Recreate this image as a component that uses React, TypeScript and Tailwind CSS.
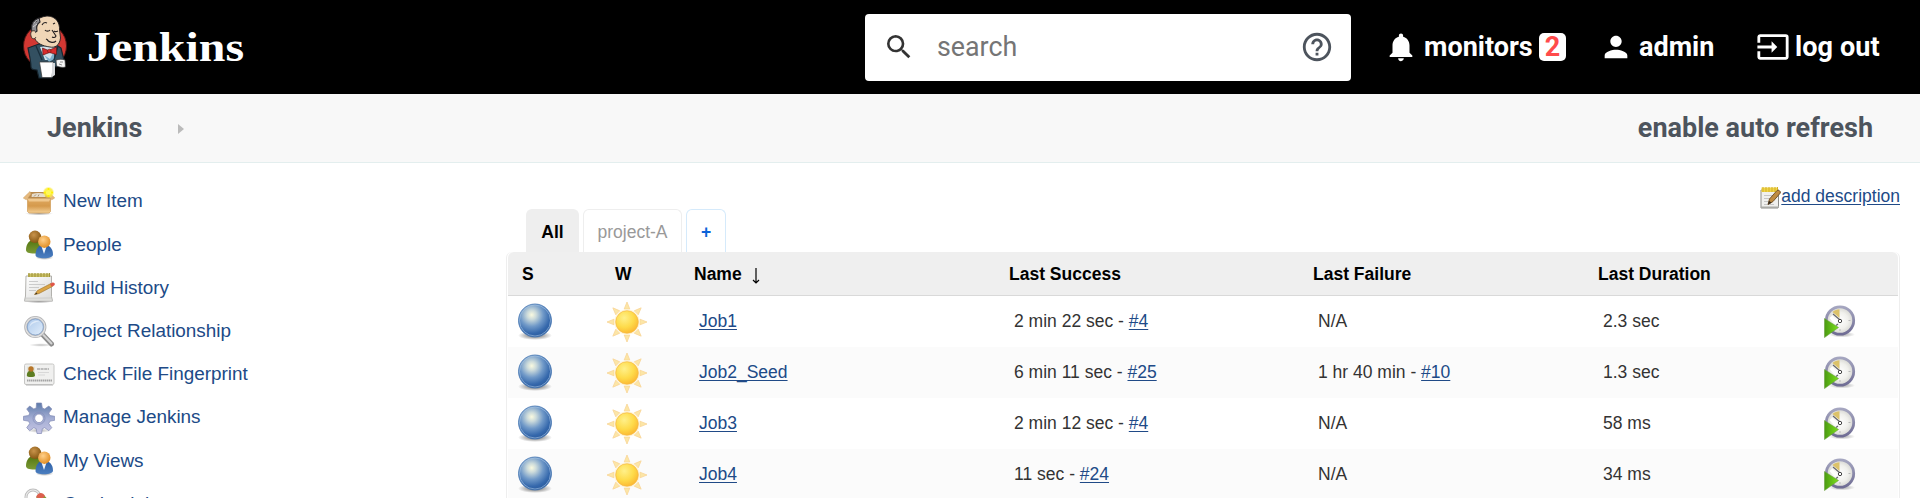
import React from "react";
import { MdHelpOutline, MdInput, MdNotifications, MdPerson, MdSearch } from "react-icons/md";

const Defs = () => (
  <svg width="0" height="0" className="absolute">
    <defs>
      <radialGradient id="ball" cx="0.4" cy="0.33" r="0.7">
        <stop offset="0" stopColor="#fafae0" />
        <stop offset="0.2" stopColor="#cbdadb" />
        <stop offset="0.5" stopColor="#7099c8" />
        <stop offset="0.8" stopColor="#3568ac" />
        <stop offset="1" stopColor="#2a5a9c" />
      </radialGradient>
      <radialGradient id="shadow">
        <stop offset="0" stopColor="#000" stopOpacity="0.6" />
        <stop offset="0.6" stopColor="#000" stopOpacity="0.25" />
        <stop offset="1" stopColor="#000" stopOpacity="0" />
      </radialGradient>
      <radialGradient id="sun" cx="0.38" cy="0.32" r="0.75">
        <stop offset="0" stopColor="#fff08a" />
        <stop offset="0.55" stopColor="#fedb4a" />
        <stop offset="1" stopColor="#fbb32e" />
      </radialGradient>
      <linearGradient id="box" x1="0" y1="0" x2="0" y2="1">
        <stop offset="0" stopColor="#dfa860" />
        <stop offset="0.5" stopColor="#d59a4c" />
        <stop offset="1" stopColor="#f4cf95" />
      </linearGradient>
      <radialGradient id="glow">
        <stop offset="0" stopColor="#ffffc0" />
        <stop offset="0.35" stopColor="#fff23a" />
        <stop offset="0.7" stopColor="#fbea3c" stopOpacity="0.8" />
        <stop offset="1" stopColor="#fff36a" stopOpacity="0" />
      </radialGradient>
      <radialGradient id="brown" cx="0.4" cy="0.35" r="0.7">
        <stop offset="0" stopColor="#c9934a" />
        <stop offset="1" stopColor="#80520f" />
      </radialGradient>
      <radialGradient id="orange" cx="0.4" cy="0.35" r="0.7">
        <stop offset="0" stopColor="#ffd08a" />
        <stop offset="1" stopColor="#e08a1e" />
      </radialGradient>
      <linearGradient id="green" x1="0" y1="0" x2="0" y2="1">
        <stop offset="0" stopColor="#50740f" />
        <stop offset="1" stopColor="#7c9a36" />
      </linearGradient>
      <linearGradient id="blue" x1="0" y1="0" x2="0" y2="1">
        <stop offset="0" stopColor="#2c5ea4" />
        <stop offset="1" stopColor="#4c7fc0" />
      </linearGradient>
      <linearGradient id="paper" x1="0" y1="0" x2="1" y2="1">
        <stop offset="0" stopColor="#ffffff" />
        <stop offset="1" stopColor="#d9d9d7" />
      </linearGradient>
      <linearGradient id="lens" x1="0" y1="0" x2="1" y2="1">
        <stop offset="0" stopColor="#a9c6ea" />
        <stop offset="1" stopColor="#e6f1fc" />
      </linearGradient>
      <linearGradient id="gear" x1="0" y1="0" x2="0" y2="1">
        <stop offset="0" stopColor="#5c7aa9" />
        <stop offset="0.5" stopColor="#a3add3" />
        <stop offset="1" stopColor="#c5c4e4" />
      </linearGradient>
      <linearGradient id="rim" x1="0" y1="0" x2="0" y2="1">
        <stop offset="0" stopColor="#a5a6c0" />
        <stop offset="1" stopColor="#6f6c94" />
      </linearGradient>
      <radialGradient id="face">
        <stop offset="0" stopColor="#ffffff" />
        <stop offset="0.6" stopColor="#f0f0ec" />
        <stop offset="1" stopColor="#d4d4d0" />
      </radialGradient>
      <linearGradient id="play" x1="0" y1="0" x2="1" y2="0">
        <stop offset="0" stopColor="#4b9a12" />
        <stop offset="1" stopColor="#7be01c" />
      </linearGradient>
    </defs>
  </svg>
);

const Icon = ({ children }: { children: React.ReactNode }) => (
  <svg width="32" height="32" viewBox="0 0 32 32" className="block shrink-0">
    {children}
  </svg>
);

const NewItemIcon = () => (
  <Icon>
    <ellipse cx="16" cy="27.5" rx="14" ry="2" fill="url(#shadow)" opacity="0.6" />
    <path d="M4.500 13h23v12.500l-1.500 1.500H6L4.500 25.500z" fill="url(#box)" stroke="#d09c58" strokeWidth="0.7" />
    <path d="M4.500 13 7 6h18.500l2.500 7z" fill="#b98a4e" />
    <path d="M9 8c4-1.500 9-1.500 13 0l.5 3h-14z" fill="#e6ddcd" />
    <path d="M11 10.500 13 8.500M15 10.500l1-2" stroke="#a99477" strokeWidth="1" />
    <path d="M4.500 12.500h23l-1.500 3H6z" fill="#f0c88e" />
    <path d="M7 5.500 0.300 12l3 1.800L8 8zM25.500 5.500 31.700 12l-3 1.800L24.500 8z" fill="#e6b97d" stroke="#d0a468" strokeWidth="0.6" />
    <circle cx="25.500" cy="6.500" r="6" fill="url(#glow)" />
    <path d="M25.500 2v9M21 6.500h9" stroke="#fff200" strokeWidth="1.500" />
    <circle cx="25.500" cy="6.500" r="2.600" fill="#fff85a" />
  </Icon>
);

const PeopleIcon = () => (
  <Icon>
    <ellipse cx="21.500" cy="28.500" rx="9" ry="2.500" fill="url(#shadow)" opacity="0.7" />
    <path d="M3 21c0-6 3.500-10.500 8.500-10.500S20 14 20 20c0 2.500-4 4.500-9 4.500S3 23.500 3 21z" fill="url(#green)" />
    <circle cx="12" cy="7.800" r="6.200" fill="url(#brown)" />
    <path d="M12.500 26c0-5.500 3-10.500 8.500-10.500S30 20 30 25.500c0 2.500-4 3.800-9 3.800s-8.500-1-8.500-3.300z" fill="url(#blue)" />
    <path d="M18.500 17.500 21 25l2.500-7.500z" fill="#f0f4fa" />
    <circle cx="21.300" cy="12.700" r="6.200" fill="url(#orange)" />
  </Icon>
);

const HistoryIcon = () => (
  <Icon>
    <ellipse cx="16" cy="29.500" rx="14" ry="1.700" fill="url(#shadow)" opacity="0.7" />
    <path d="M3 4h25.500v20.500l1 4.500H1.500L2.500 24z" fill="url(#paper)" stroke="#aaa9a5" strokeWidth="0.9" />
    <path d="M2.500 26 1.500 29h28l-1-3z" fill="#dfdfdc" stroke="#bbb" strokeWidth="0.5" />
    <path d="M5 1.500h22V5H5z" fill="#c9bf63" />
    <path d="M6 1v4M9 1v4M12 1v4M15 1v4M18 1v4M21 1v4M24 1v4M26.500 1v4" stroke="#a0953e" strokeWidth="1.100" />
    <path d="M6 9.500h9M6 12.500h16M6 15.500h10M6 18.500h7" stroke="#c6c6c6" strokeWidth="0.900" />
    <path d="m11.500 22.500 3-4L28 11.500l1.700 2.800L16 21.500z" fill="#dba545" stroke="#a67a30" strokeWidth="0.7" />
    <path d="m11.500 22.500 2-2 1 1.500z" fill="#3f3525" />
    <path d="m27 12 2.500-1.500c2-.500 3.200 2 1.500 3l-2.500 1.300z" fill="#df5648" />
  </Icon>
);

const SearchRelIcon = () => (
  <Icon>
    <ellipse cx="18" cy="30" rx="12" ry="1.800" fill="url(#shadow)" opacity="0.4" />
    <path d="m20 20 8.500 9" stroke="#8d8d8d" strokeWidth="5" strokeLinecap="round" />
    <path d="m20 19.500 8.500 9" stroke="#d4d4d4" strokeWidth="2" strokeLinecap="round" />
    <circle cx="12.300" cy="12" r="9.600" fill="url(#lens)" stroke="#b4b4b6" strokeWidth="3" />
    <circle cx="12.300" cy="12" r="9.600" fill="none" stroke="#e2e2e2" strokeWidth="1.300" />
    <circle cx="12.300" cy="12" r="8" fill="none" stroke="#789bc8" strokeWidth="0.7" />
    <path d="M6.500 12c.500-5 6-7.500 10-5-5-.500-8 2-10 5z" fill="#fff" opacity="0.5" />
  </Icon>
);

const FingerprintIcon = () => (
  <Icon>
    <rect x="1.500" y="6" width="29.500" height="20.500" rx="1.500" fill="#f0f0ef" stroke="#c6c6c4" />
    <path d="M3 27.200h27" stroke="#a7a7a7" opacity="0.6" />
    <rect x="4" y="8.500" width="8" height="10" fill="#e3e5dc" />
    <path d="M3.800 17.500c0-3 1.500-5 4-5s4.200 2 4.200 5c0 2-8.200 2-8.200 0z" fill="#5d7d22" />
    <circle cx="8" cy="11" r="2.700" fill="#b7762a" />
    <path d="M14 11h12" stroke="#ababab" strokeWidth="1.700" strokeDasharray="3 .6" />
    <path d="M15 14.500h11M15 17h7" stroke="#d8d8d8" />
    <path d="M4 22.500h25" stroke="#a4a4a4" strokeWidth="2.200" strokeDasharray="1.500 .5" />
  </Icon>
);

const GearIcon = () => (
  <Icon>
    <ellipse cx="16" cy="28.500" rx="12" ry="2.500" fill="url(#shadow)" opacity="0.5" />
    <path
      fillRule="evenodd"
      d="M13.500 1h5l.8 5 2.400 1 4.100-3 3 3-3 4.100 1 2.400 4.900.8v4l-4.900.9-1 2.400 3 4.100-3 3-4.100-3-2.400 1-.8 4.800h-4.500l-.8-4.800-2.400-1-4.100 3-3-3 3-4.100-1-2.400-5.200-.9v-4l5.200-.8 1-2.400-3-4.100 3-3 4.100 3 2.400-1zM16 12a4.300 4.300 0 1 0 0 8.600 4.300 4.300 0 0 0 0-8.600z"
      fill="url(#gear)"
      stroke="#8189b4"
      strokeWidth="0.7"
    />
    <circle cx="16" cy="16.300" r="6" fill="none" stroke="#8790bb" strokeWidth="0.8" />
  </Icon>
);

const KeysIcon = () => (
  <Icon>
    <circle cx="10" cy="9" r="7" fill="none" stroke="#bdbdbd" strokeWidth="3" />
    <circle cx="10" cy="9" r="7" fill="none" stroke="#ececec" strokeWidth="1.200" />
    <path d="M13 10c3-5 9-4 11 1v10H13z" fill="#7e9e35" />
    <path d="M13 9c2-5 7-5 9-1l-4 4z" fill="#dc604e" />
    <path d="M9 15h10v14H9z" fill="#d5a94d" />
  </Icon>
);

const NotepadIcon = () => (
  <svg width="22" height="23" viewBox="0 0 22 23" className="block shrink-0">
    <path d="M1 4h17.500v16.500l-.5 1.500H1z" fill="#f0f0ee" stroke="#8b8b88" strokeWidth="1" />
    <path d="M1 20.500h17.500V22H1z" fill="#aaaaa6" />
    <path d="M1.500 1.500h16.500v4.500H1.500z" fill="#f0d548" />
    <path d="M3 1v5M6 1v5M9 1v5M12 1v5M15 1v5M17.500 1v5" stroke="#d3af28" strokeWidth="1" />
    <path d="M4 9.500h10M4 12.500h6M4 15.500h4M4 18.500h10" stroke="#c6c6c6" strokeWidth="1" />
    <path d="M8 18.500 9.500 13l7.500-8.500c1.500-1 4 .8 3.300 2.500L13 15.500z" fill="#bf8c42" stroke="#76552a" strokeWidth="1" />
    <path d="m8 18.500 1-3.800 2.500 2z" fill="#332a20" />
  </svg>
);

const Ball = () => (
  <svg width="34" height="38" viewBox="0 0 34 38" className="block">
    <ellipse cx="17" cy="32.500" rx="17" ry="4.500" fill="url(#shadow)" />
    <circle cx="17" cy="17.500" r="16.500" fill="url(#ball)" stroke="#4576b3" strokeWidth="0.8" />
    <circle cx="17" cy="17.500" r="15.500" fill="none" stroke="#a9c6e6" strokeWidth="0.9" opacity="0.65" />
  </svg>
);

const rays = [0, 45, 90, 135, 180, 225, 270, 315];
const Sun = () => (
  <svg width="42" height="42" viewBox="-21 -21 42 42" className="block">
    {rays.map((a) => (
      <path key={a} d="M-2.800-13 0-20 2.800-13z" fill="#fce6a6" stroke="#f9d698" strokeWidth="0.8" transform={`rotate(${a})`} />
    ))}
    <circle r="12.800" fill="#fff3cf" opacity="0.7" />
    <circle r="11.300" fill="url(#sun)" stroke="#f7b845" strokeWidth="0.7" />
  </svg>
);

const BuildClock = () => (
  <svg width="32" height="34" viewBox="0 0 32 34" className="block">
    <ellipse cx="18" cy="29.500" rx="13" ry="3" fill="url(#shadow)" opacity="0.6" />
    <circle cx="16" cy="15.500" r="13.700" fill="url(#face)" stroke="url(#rim)" strokeWidth="2.800" />
    <path d="m15.500 13-7-6c2-2 4.500-2.800 7-2.800z" fill="#dcc26a" />
    <path d="M24.500 15.500h2M16 24v2" stroke="#bbb" strokeWidth="1" />
    <path d="m9 9 6.500 5.500M14 19l-2 1.500" fill="none" stroke="#66666c" strokeWidth="1.200" />
    <circle cx="16" cy="16" r="1.700" fill="#fff" stroke="#444" strokeWidth="1" />
    <path d="m5.500 13 3-2.500 5.500 6.500-3 2z" fill="#fff" />
    <path d="M0.500 13.500 14.500 22.500 0.500 32.500z" fill="url(#play)" stroke="#6aa03e" strokeWidth="0.6" />
  </svg>
);

const Butler = () => (
  <svg width="46" height="66" viewBox="0 0 46 66" className="block">
    <ellipse cx="23" cy="32" rx="21.500" ry="22" fill="#d33833" stroke="#4a1512" strokeWidth="1" />
    <path d="M6 34 17 30h16l6 4 3 12-2 6-8 1-2 11H17l-2-8c-4 0-6-1-6-3 0-6-2-13-3-19z" fill="#335061" stroke="#17252e" strokeWidth="1.200" />
    <path d="M18 33 23 46h6l5-12-8-2z" fill="#d4e3ec" />
    <path d="m22 41 6 4 4-8v8l-5 3z" fill="#7fb0cc" />
    <path d="m14 32 6 14M36 32l-4 14" stroke="#1a2f3c" strokeWidth="1.300" />
    <path d="M12 19c-3-8 2-16 13-17 9 0 13 7 12.500 14l1 8c-1 8-6 10-10.500 9-8-1-13-4-15-8z" fill="#f0d6b7" stroke="#231f20" strokeWidth="0.900" />
    <path d="M17 4c-6 2-8 6-7.500 12l1.500 4 4-3c-1-4 0-7 3-9z" fill="#8d8c91" stroke="#2b292c" strokeWidth="1.200" />
    <path d="M12 9c1-2 3-3 5-3M11 13l4-3" stroke="#d2d1d3" strokeWidth="0.900" />
    <path d="M13 17c-3-1-5 1-4 5s4 3 5 1" fill="#f0d6b7" stroke="#332a25" strokeWidth="0.900" />
    <path d="M20 11c1-2 3-3 5-2M31 10l2-1M23 16c1 1.500 4 1.500 5 0M32 17c1 1 2 1 4 0M30 16l4 6c-1 2-2 2-4 1M25 26c3 3 7 3 9 1M24 25l2 1" fill="none" stroke="#231f20" strokeWidth="1.100" />
    <path d="m20.500 34 6 2.500 8-3.500v7.500l-7-2-6.500 2.500z" fill="#d92c2c" stroke="#651716" strokeWidth="0.700" />
    <circle cx="27.300" cy="37" r="1.800" fill="#d92c2c" stroke="#651716" strokeWidth="0.500" />
    <path d="M17.500 48h14l-1.500 15.500H20z" fill="#fff" stroke="#353535" strokeWidth="0.700" />
    <path d="M30 49h3v12l-3 2z" fill="#d6d8db" />
    <path d="M34 46c4-1 6-1 9 0l.5 7c-3 1-6 0-9-1z" fill="#f6f6f6" stroke="#333" strokeWidth="0.700" />
    <path d="M38 48h3M37 50l3 1" stroke="#777" strokeWidth="0.800" />
  </svg>
);

const menu = [
  { label: "New Item", Icon: NewItemIcon },
  { label: "People", Icon: PeopleIcon },
  { label: "Build History", Icon: HistoryIcon },
  { label: "Project Relationship", Icon: SearchRelIcon },
  { label: "Check File Fingerprint", Icon: FingerprintIcon },
  { label: "Manage Jenkins", Icon: GearIcon },
  { label: "My Views", Icon: PeopleIcon },
  { label: "Credentials", Icon: KeysIcon },
];

type Run = { age: string; build?: string };
const jobs: { name: string; success: Run; failure: Run; duration: string }[] = [
  { name: "Job1", success: { age: "2 min 22 sec", build: "#4" }, failure: { age: "N/A" }, duration: "2.3 sec" },
  { name: "Job2_Seed", success: { age: "6 min 11 sec", build: "#25" }, failure: { age: "1 hr 40 min", build: "#10" }, duration: "1.3 sec" },
  { name: "Job3", success: { age: "2 min 12 sec", build: "#4" }, failure: { age: "N/A" }, duration: "58 ms" },
  { name: "Job4", success: { age: "11 sec", build: "#24" }, failure: { age: "N/A" }, duration: "34 ms" },
];

const link = "text-[#204a87] underline underline-offset-2";

const RunText = ({ run }: { run: Run }) => (
  <span>
    {run.age}
    {run.build && (
      <>
        {" - "}
        <a className={link}>{run.build}</a>
      </>
    )}
  </span>
);

export default function App() {
  return (
    <div className="h-[498px] w-[1920px] overflow-hidden bg-white font-['Liberation_Sans',sans-serif] text-[17.5px] text-[#333]">
      <Defs />
      <header className="flex h-[94px] items-center bg-black font-[Roboto,sans-serif] text-[27px] font-bold text-white">
        <div className="flex w-[865px] items-center pl-[22px]">
          <Butler />
          <span className="-mt-px ml-[19px] origin-left scale-x-[1.14] font-['Liberation_Serif',serif] text-[42px] leading-none font-bold">
            Jenkins
          </span>
        </div>
        <div className="flex h-[67px] w-[486px] items-center rounded bg-white pr-[17px] pl-[18px]">
          <MdSearch size={32} color="#333" />
          <span className="ml-[22px] flex-1 text-[26.8px] font-normal text-[#757575]">search</span>
          <MdHelpOutline size={34} color="#4d545d" />
        </div>
        <nav className="flex items-center">
          <div className="flex w-[215px] items-center pl-[33px]">
            <MdNotifications size={34} />
            <span className="ml-[6px] w-[108px]">monitors</span>
            <span className="ml-[7px] flex h-7 w-[27px] items-center justify-center rounded-[5px] bg-white font-bold text-[#ff4b4b]">2</span>
          </div>
          <div className="flex w-[156px] items-center pl-[33px]">
            <MdPerson size={34} />
            <span className="ml-[6px]">admin</span>
          </div>
          <div className="flex items-center pl-[34px]">
            <MdInput size={34} />
            <span className="ml-[5px] tracking-[0.1px]">log out</span>
          </div>
        </nav>
      </header>

      <div className="flex h-[69px] items-center justify-between border-b border-[#e3eeee] bg-[#f8f8f8] pr-[47px] pl-[47px] font-[Roboto,sans-serif] text-[27px] font-bold text-[#4d545d]">
        <div className="flex items-center">
          <span>Jenkins</span>
          <svg width="6" height="10" viewBox="0 0 6 10" className="mt-px ml-[36px]">
            <path d="M0 0 6 5 0 10z" fill="#bbb" />
          </svg>
        </div>
        <span>enable auto refresh</span>
      </div>

      <div className="flex">
        <aside className="flex w-[506px] flex-col pt-[17px] pl-[23px]">
          {menu.map(({ label, Icon: MenuIcon }) => (
            <a key={label} className="flex h-[43.200px] items-center text-[18.900px] text-[#204a87]">
              <MenuIcon />
              <span className="ml-[8px]">{label}</span>
            </a>
          ))}
        </aside>

        <main className="w-[1394px]">
          <div className="flex h-[46px] justify-end pt-[23px]">
            <a className="flex h-[23px] items-center">
              <NotepadIcon />
              <span className={`-mt-[3px] -ml-px ${link}`}>add description</span>
            </a>
          </div>
          <div className="flex h-[43px] gap-1 pl-5">
            <div className="flex w-[53px] items-center justify-center rounded-t-md bg-[#eee] pt-[3px] font-bold text-black">All</div>
            <div className="flex w-[99px] items-center justify-center rounded-t-md border border-b-0 border-[#eee] pt-0.5 text-[#999]">project-A</div>
            <div className="flex w-[40px] items-center justify-center rounded-t-md border border-b-0 border-[#d5eafb] pt-0.5 font-bold text-[#0b63d8]">+</div>
          </div>
          <div className="h-[260px] rounded-t-md border-x border-[#eee] px-px">
            <div className="grid h-[44px] grid-cols-[93px_79px_315px_304px_285px_1fr] items-center rounded-t-md border-b border-[#d9d9d9] bg-[#efefef] pt-0.5 pl-[14px] font-bold text-black">
              <span>S</span>
              <span>W</span>
              <span className="flex items-center">
                Name
                <svg width="8" height="16" viewBox="0 0 8 16" className="mt-0.5 ml-[10px]">
                  <path d="M4 0v15M1 12l3 3 3-3" fill="none" stroke="#000" strokeWidth="1.200" />
                </svg>
              </span>
              <span>Last Success</span>
              <span>Last Failure</span>
              <span>Last Duration</span>
            </div>
            {jobs.map((job) => (
              <div
                key={job.name}
                className="grid h-[51px] grid-cols-[88px_93px_315px_304px_285px_221px_1fr] items-center pl-[10px] odd:bg-[#fbfbfb]"
              >
                <Ball />
                <Sun />
                <a className={`${link} justify-self-start`}>{job.name}</a>
                <RunText run={job.success} />
                <RunText run={job.failure} />
                <span>{job.duration}</span>
                <BuildClock />
              </div>
            ))}
          </div>
        </main>
      </div>
    </div>
  );
}
